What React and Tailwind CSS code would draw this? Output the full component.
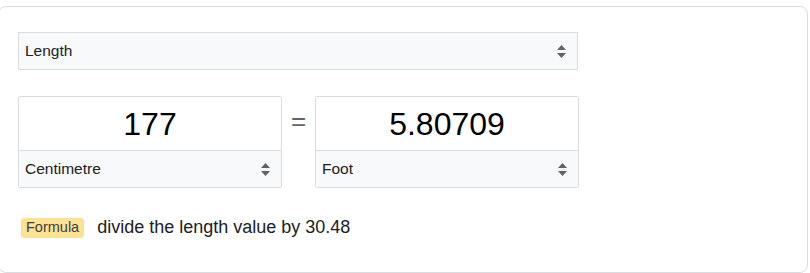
import React from 'react';

function Arrows() {
  return (
    <svg width="9" height="13" viewBox="0 0 9 13" className="shrink-0">
      <path d="M0 5 L4.5 0 L9 5 Z" fill="#5f6368" />
      <path d="M0 8 L4.5 13 L9 8 Z" fill="#5f6368" />
    </svg>
  );
}

function Select({ label, className }) {
  return (
    <div className={`flex items-center justify-between bg-[#f8f9fa] pl-[6px] pr-[11px] text-[15.5px] text-[#202124] ${className}`}>
      <span>{label}</span>
      <Arrows />
    </div>
  );
}

function UnitBox({ value, unit }) {
  return (
    <div className="flex w-[264px] flex-col overflow-hidden rounded-[2px] border border-[#dadce0]">
      <div className="flex h-[53px] items-center justify-center bg-white text-[32px] text-black">
        {value}
      </div>
      <Select label={unit} className="h-[37px] border-t border-[#dadce0]" />
    </div>
  );
}

export default function App() {
  return (
    <div className="h-[273px] w-[810px] overflow-hidden bg-white pt-[6px] font-['Liberation_Sans',Arial,sans-serif]">
      <div className="ml-[-2px] h-[267px] w-[810px] rounded-lg border border-[#dadce0] px-[19px] pt-[25px]">
        {/* Category */}
        <Select label="Length" className="h-[38px] w-[560px] border border-[#dadce0]" />

        {/* Conversion row */}
        <div className="mt-[26px] flex items-center">
          <UnitBox value="177" unit="Centimetre" />
          <div className="flex w-[33px] justify-center pb-[42px] text-[26px] leading-none text-[#5f6368]">=</div>
          <UnitBox value="5.80709" unit="Foot" />
        </div>

        {/* Formula */}
        <div className="mt-[26px] flex items-center">
          <span className="ml-[3px] flex h-[20px] items-center rounded-[3px] bg-[#fde293] px-[5px] text-[14.5px] text-[#3c4043]">
            Formula
          </span>
          <span className="ml-[13px] text-[18px] text-[#202124]">divide the length value by 30.48</span>
        </div>
      </div>
    </div>
  );
}
